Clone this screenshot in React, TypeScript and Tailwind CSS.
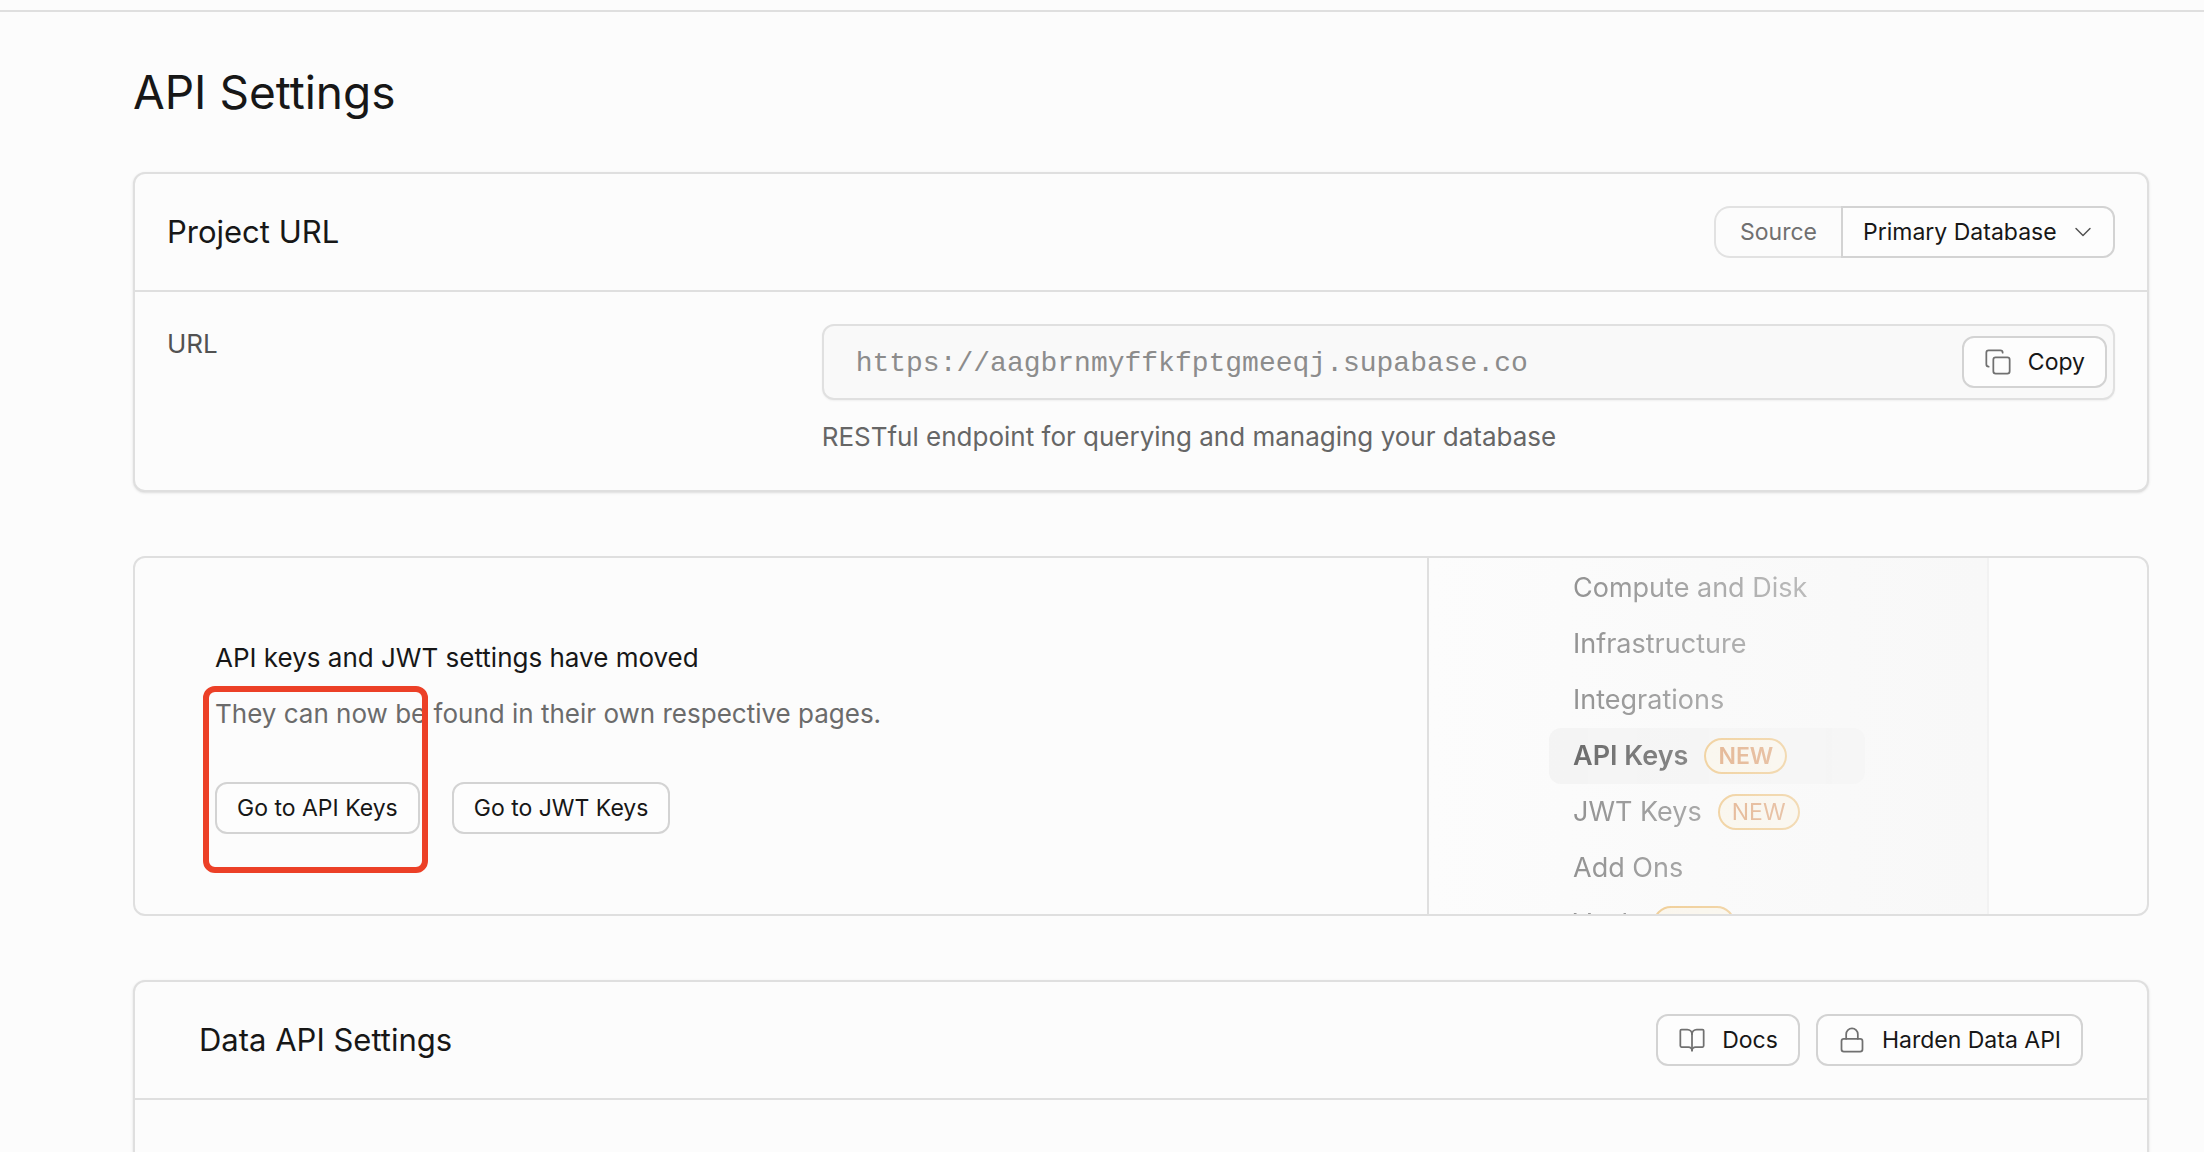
import { BookOpen, ChevronDown, Copy, Lock } from "lucide-react";
import { useState, type ReactNode } from "react";

const PROJECT_URL = "https://aagbrnmyffkfptgmeeqj.supabase.co";

const SETTINGS_MENU = [
  { label: "Compute and Disk" },
  { label: "Infrastructure" },
  { label: "Integrations" },
  { label: "API Keys", isNew: true, active: true },
  { label: "JWT Keys", isNew: true },
  { label: "Add Ons" },
  { label: "Vault", isNew: true },
];

function Button({ icon, children, onClick }: { icon?: ReactNode; children: ReactNode; onClick?: () => void }) {
  return (
    <button
      type="button"
      onClick={onClick}
      className="flex h-[52px] items-center gap-4 whitespace-nowrap rounded-xl border-2 border-[#d3d3d3] bg-[#fdfdfd] px-5 text-[23px] text-[#171717] hover:bg-[#f3f3f3]"
    >
      {icon}
      {children}
    </button>
  );
}

function Card({ children }: { children: ReactNode }) {
  return (
    <section className="overflow-hidden rounded-xl border-2 border-[#dfdfdf] bg-[#fcfcfc] shadow-sm">{children}</section>
  );
}

// Decorative preview of the settings sidebar, faded out to the right.
function MenuPreview() {
  return (
    <div aria-hidden className="relative w-[720px] shrink-0 overflow-hidden border-l-2 border-[#dfdfdf]">
      <div className="absolute inset-y-0 left-0 w-[560px] border-r-2 border-[#f2f2f2] bg-linear-to-r from-[#fcfcfc] to-[#f8f8f8]" />
      <ul className="absolute left-[120px] top-0.5 w-[316px] [mask-image:linear-gradient(to_right,rgb(0_0_0/0.78),rgb(0_0_0/0.38))]">
        {SETTINGS_MENU.map((item) => (
          <li
            key={item.label}
            className={
              item.active
                ? "flex h-14 items-center gap-4 rounded-xl bg-[#f2f2f2] px-6 text-[27px] font-semibold text-[#3c3c3c]"
                : "flex h-14 items-center gap-4 px-6 text-[27px] text-[#707070]"
            }
          >
            {item.label}
            {item.isNew && (
              <span className="flex h-9 items-center rounded-full border-2 border-[#ebb866] bg-[#faf4e6] px-3 text-[23px] text-[#d68a50]">
                NEW
              </span>
            )}
          </li>
        ))}
      </ul>
    </div>
  );
}

export default function App() {
  const [copied, setCopied] = useState(false);

  function copyUrl() {
    navigator.clipboard?.writeText(PROJECT_URL);
    setCopied(true);
  }

  return (
    <div className="h-screen overflow-hidden bg-[#fcfcfc] pt-2.5 font-[Inter,sans-serif] text-[#171717]">
      <main className="border-t-2 border-[#dfdfdf] pl-[133px] pr-[55px] pt-14">
        <h1 className="text-[46px] leading-[48px]">API Settings</h1>

        <div className="mt-14 flex flex-col gap-16">
          <Card>
            <div className="flex items-center justify-between border-b-2 border-[#dfdfdf] p-8">
              <h2 className="text-[31px] leading-[52px]">Project URL</h2>
              <div className="flex h-[52px] text-[23px]">
                <label
                  htmlFor="source"
                  className="flex items-center rounded-l-2xl border-2 border-r-0 border-[#e2e2e2] px-6 text-[#707070]"
                >
                  Source
                </label>
                <div className="relative">
                  <select
                    id="source"
                    className="h-[52px] w-[274px] appearance-none rounded-r-xl border-2 border-[#d3d3d3] bg-[#fdfdfd] px-5 text-[23px]"
                  >
                    <option>Primary Database</option>
                  </select>
                  <ChevronDown
                    size={28}
                    strokeWidth={1.25}
                    className="pointer-events-none absolute right-[18px] top-3 text-[#525252]"
                  />
                </div>
              </div>
            </div>

            <div className="grid grid-cols-12 gap-4 p-8">
              <label htmlFor="url" className="col-span-4 text-[26px] leading-10 text-[#525252]">
                URL
              </label>
              <div className="col-span-8">
                <div className="flex h-[76px] items-center rounded-xl border-2 border-[#e0e0e0] bg-[#f9f9f9] pr-1.5 shadow-xs">
                  <input
                    id="url"
                    readOnly
                    value={PROJECT_URL}
                    className="min-w-0 flex-1 bg-transparent pl-8 pt-1 font-['Liberation_Mono',monospace] text-[28px] text-[#8c8c8c] outline-none"
                  />
                  <Button
                    icon={<Copy size={28} strokeWidth={1.5} className="text-[#707070]" />}
                    onClick={copyUrl}
                  >
                    {copied ? "Copied" : "Copy"}
                  </Button>
                </div>
                <p className="mt-4 text-[26px] leading-[42px] text-[#666666]">
                  RESTful endpoint for querying and managing your database
                </p>
              </div>
            </div>
          </Card>

          <section className="flex overflow-hidden rounded-xl border-2 border-[#dfdfdf]">
            <div className="flex-1 px-20 pb-20 pt-[72px] text-[26px] leading-[56px]">
              <h2>API keys and JWT settings have moved</h2>
              <p className="text-[#6b6b6b]">They can now be found in their own respective pages.</p>
              <div className="mt-10 flex gap-8">
                <div className="relative">
                  <Button>Go to API Keys</Button>
                  <div className="pointer-events-none absolute -bottom-[39px] -left-3 -right-2 -top-24 rounded-xl border-6 border-[#ec4027]" />
                </div>
                <Button>Go to JWT Keys</Button>
              </div>
            </div>
            <MenuPreview />
          </section>

          <Card>
            <div className="flex items-center justify-between border-b-2 border-[#dfdfdf] px-16 py-8">
              <h2 className="text-[31px] leading-[52px]">Data API Settings</h2>
              <div className="flex gap-4">
                <Button icon={<BookOpen size={28} strokeWidth={1.5} className="text-[#707070]" />}>Docs</Button>
                <Button icon={<Lock size={28} strokeWidth={1.5} className="text-[#707070]" />}>Harden Data API</Button>
              </div>
            </div>
            <div className="h-40" />
          </Card>
        </div>
      </main>
    </div>
  );
}
